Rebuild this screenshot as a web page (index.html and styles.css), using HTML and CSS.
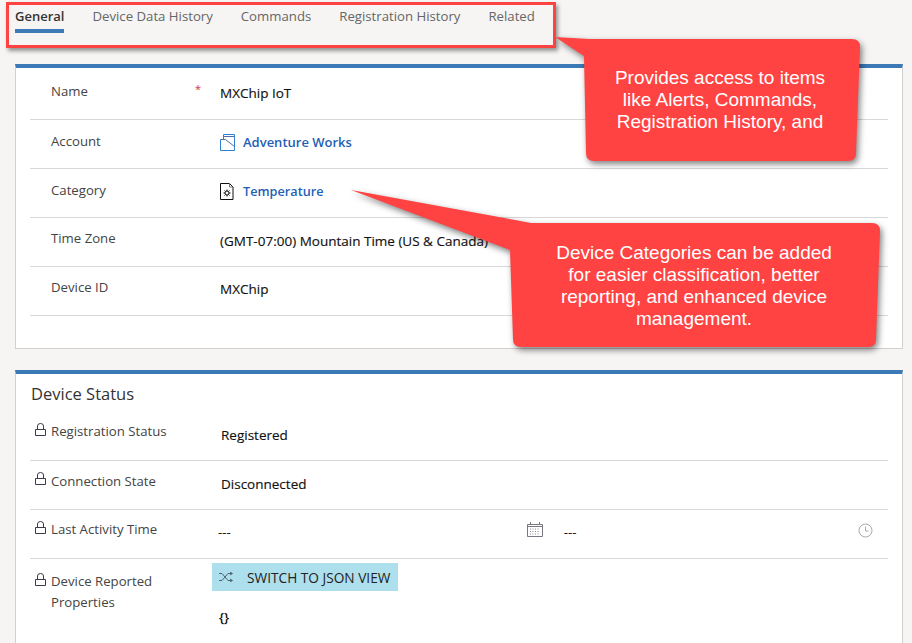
FILE: index.html
```html
<!DOCTYPE html>
<html>
<head>
  <meta name="viewport" content="width=device-width,initial-scale=1.0">
  <title>MXChip IoT</title>
  <link rel="stylesheet" href="styles.css">
</head>
<body>
  <ul class="tabs">
    <li class="tab active">General</li>
    <li class="tab">Device Data History</li>
    <li class="tab">Commands</li>
    <li class="tab">Registration History</li>
    <li class="tab">Related</li>
  </ul>

  <section class="card general">
    <div class="row first">
      <span class="label">Name</span>
      <span class="required">*</span>
      <span class="value">MXChip IoT</span>
    </div>
    <div class="row">
      <span class="label">Account</span>
      <span class="value link">
        <svg class="icon" width="15" height="17" viewBox="0 0 15 17" fill="none" stroke="#2f7fd6">
          <path d="M.500 5.500v11h14V.500H3.500v5"/>
          <path d="M.500 5.500h5l9 7" stroke="#4f6fa8"/>
          <path d="M3.500 2.500h11" stroke="#4f6fa8"/>
        </svg>
        Adventure Works
      </span>
    </div>
    <div class="row">
      <span class="label">Category</span>
      <span class="value link">
        <svg class="icon" width="15" height="17" viewBox="0 0 15 17" fill="none" stroke="#111">
          <path d="M.500 .500h9l3.500 3.500v12.500h-12.500z"/>
          <path d="M9.500 .500v3.500h3.500" stroke="#777"/>
          <circle cx="7" cy="10" r="2"/>
          <path d="M7 6.500V8M7 12v1.500M3.500 10H5M9 10h1.500M4.500 7.500l1 1M8.500 11.500l1 1M9.500 7.500l-1 1M5.500 11.500l-1 1"/>
        </svg>
        <span class="temperature">Temperature</span>
      </span>
    </div>
    <div class="row">
      <span class="label">Time Zone</span>
      <span class="value low">(GMT-07:00) Mountain Time (US &amp; Canada)</span>
    </div>
    <div class="row">
      <span class="label">Device ID</span>
      <span class="value">MXChip</span>
    </div>
  </section>

  <section class="card status">
    <h2 class="card-title">Device Status</h2>
    <div class="row">
      <span class="label">
        <svg class="lock" width="11" height="13" viewBox="0 0 11 13" fill="none" stroke="#3b3b4a"><path d="M.500 6.500h10v6H.500zM2.500 6.500V3a3 2.500 0 0 1 6 0v3.500"/></svg>
        Registration Status
      </span>
      <span class="value">Registered</span>
    </div>
    <div class="row">
      <span class="label">
        <svg class="lock" width="11" height="13" viewBox="0 0 11 13" fill="none" stroke="#3b3b4a"><path d="M.500 6.500h10v6H.500zM2.500 6.500V3a3 2.500 0 0 1 6 0v3.500"/></svg>
        Connection State
      </span>
      <span class="value">Disconnected</span>
    </div>
    <div class="row">
      <span class="label">
        <svg class="lock" width="11" height="13" viewBox="0 0 11 13" fill="none" stroke="#3b3b4a"><path d="M.500 6.500h10v6H.500zM2.500 6.500V3a3 2.500 0 0 1 6 0v3.500"/></svg>
        Last Activity Time
      </span>
      <div class="datetime">
        <span class="dashes">---</span>
        <svg class="calendar" width="16" height="15" viewBox="0 0 16 15" fill="none" stroke="#77777f">
          <path d="M.500 2.500h15v12H.500zM.500 4.500h15M3.500 0v3M12.500 0v3"/>
          <path d="M3 7h10M3 9.500h10M3 12h10" stroke="#8d8da8" stroke-dasharray="1 1.500"/>
        </svg>
        <span class="dashes">---</span>
        <svg class="clock" width="15" height="15" viewBox="0 0 15 15" fill="none" stroke="#aaa">
          <circle cx="7.500" cy="7.500" r="6.500"/>
          <path d="M7.500 3.500v4.500h3"/>
        </svg>
      </div>
    </div>
    <div class="row last">
      <span class="label">
        <svg class="lock" width="11" height="13" viewBox="0 0 11 13" fill="none" stroke="#3b3b4a"><path d="M.500 6.500h10v6H.500zM2.500 6.500V3a3 2.500 0 0 1 6 0v3.500"/></svg>
        Device Reported<br>Properties
      </span>
      <div>
        <div class="json-btn">
          <svg width="14" height="10" viewBox="0 0 14 10" fill="none" stroke="#4d6670">
            <path d="M0 1.500h3l6 7h4M0 8.500h3l6-7h4"/>
            <path d="M11 0l2.500 1.500L11 3M11 7l2.500 1.500L11 10"/>
          </svg>
          SWITCH TO JSON VIEW
        </div>
        <div class="json-value">{}</div>
      </div>
    </div>
  </section>

  <!-- annotations pasted over the screenshot -->
  <div class="highlight"></div>

  <div class="callout callout-tabs">
    <svg class="callout-shape" width="912" height="643">
      <path d="M555 37L589 39H852Q860 39 860 47L856 153Q856 161 848 161H594Q586 161 586 153L584 56Z"/>
    </svg>
    <p class="callout-text">Provides access to items<br>like Alerts, Commands,<br>Registration History, and</p>
  </div>

  <div class="callout callout-category">
    <svg class="callout-shape" width="912" height="643">
      <path d="M351 190L531 223H872Q880 223 880 231L876 339Q876 347 868 347H521Q513 347 513 339L510 250Z"/>
    </svg>
    <p class="callout-text">Device Categories can be added<br>for easier classification, better<br>reporting, and enhanced device<br>management.</p>
  </div>
</body>
</html>
```

FILE: styles.css
```css
html,
body {
  height: 643px;
  overflow: hidden;
}

body {
  margin: 0;
  padding: 0 9px 0 15px;
  background: #f6f5f3;
  color: #111;
  font-family: "Open Sans", "Noto Sans", sans-serif;
  font-size: 13.2px;
}

.tabs {
  display: flex;
  gap: 28px;
  list-style-type: none;
  margin: 0;
  padding: 0;
  height: 64px;
}

.tab {
  height: 33px;
  box-sizing: border-box;
  padding-top: 7px;
  color: #666;
}

.tab.active {
  color: #333;
  font-size: 13px;
  font-weight: 600;
  border-bottom: 4px solid #3b79b7;
}

.card {
  background: #fff;
  border: 1px solid #d2d0ce;
  border-top: 4px solid #3b79b7;
  padding: 0 14px;
}

.general {
  height: 280px;
  margin-bottom: 21px;
}

.status {
  height: 300px;
}

.card-title {
  margin: 0;
  padding: 8px 0 0 1px;
  height: 29px;
  font-size: 16.5px;
  font-weight: 400;
  color: #333;
}

.row {
  display: grid;
  grid-template-columns: 166px 24px 1fr;
  height: 48px;
  border-bottom: 1px solid #d8d8d8;
  box-sizing: content-box;
}

.row.first {
  height: 51px;
}

.label {
  grid-column: 1;
  padding: 12px 0 0 21px;
  line-height: 18px;
  color: #444;
  position: relative;
}

.first .label {
  padding-top: 14px;
}

.general .row:nth-of-type(n+4) .label {
  padding-top: 11px;
}

.required {
  grid-column: 2;
  padding-top: 12px;
  margin-left: -1px;
  color: #d13438;
  font-size: 11px;
  line-height: 18px;
}

.value {
  grid-column: 3;
  padding-top: 13px;
  line-height: 18px;
  font-size: 13.5px;
  color: #111;
  -webkit-text-stroke: 0.15px #111;
  display: flex;
  align-items: flex-start;
}

.first .value {
  padding-top: 16px;
}

.value.low {
  padding-top: 14px;
}

.value.link {
  color: #1f5fb5;
  font-size: 13px;
  font-weight: 600;
  -webkit-text-stroke: 0;
  gap: 8px;
}

.temperature {
  font-size: 12.7px;
}

.icon {
  flex: none;
  margin-top: 1px;
}

.status .row {
  grid-template-columns: 191px 1fr;
}

.status .row:nth-of-type(1) {
  height: 49px;
}

.status .value {
  grid-column: 2;
  padding-top: 15px;
}

.status .row:nth-of-type(2) .value {
  padding-top: 14px;
}

.status .label {
  padding-top: 11px;
}

.status .row:nth-of-type(3) .label {
  padding-top: 10px;
}

.lock {
  position: absolute;
  left: 5px;
  top: 11px;
}

.status .row:nth-of-type(1) .lock {
  top: 12px;
}

.datetime {
  display: flex;
  align-items: flex-start;
  padding-top: 13px;
  line-height: 18px;
  margin-left: -3px;
}

.calendar {
  margin: -1px 21px 0 296px;
}

.clock {
  margin: 0 0 0 282px;
}

.row.last {
  border-bottom: none;
  height: auto;
}

.status .last .label {
  padding-top: 12px;
  line-height: 21px;
}

.last .lock {
  top: 14px;
}

.json-btn {
  display: flex;
  align-items: center;
  gap: 14px;
  box-sizing: border-box;
  width: 186px;
  height: 28px;
  margin: 4px 0 0 -9px;
  padding-left: 7px;
  background: #aedfec;
  color: #222;
  font-size: 13.7px;
}

.json-value {
  margin: 17px 0 0 -2px;
  font-weight: 600;
  line-height: 18px;
}

.highlight {
  position: absolute;
  left: 6px;
  top: 2px;
  width: 544px;
  height: 40px;
  border: 3px solid #ff4343;
  box-shadow: 2px 3px 4px rgba(0, 0, 0, 0.4);
}

.callout-shape {
  position: absolute;
  left: 0;
  top: 0;
  fill: #ff4343;
  filter: drop-shadow(2px 3px 3px rgba(0, 0, 0, 0.5));
}

.callout-text {
  position: absolute;
  margin: 0;
  color: #fff;
  font-family: "Liberation Sans", Arial, sans-serif;
  font-size: 19px;
  line-height: 22px;
  text-align: center;
  white-space: nowrap;
}

.callout-tabs .callout-text {
  left: 586px;
  top: 67px;
  width: 268px;
}

.callout-category .callout-text {
  left: 513px;
  top: 242px;
  width: 362px;
}
```
